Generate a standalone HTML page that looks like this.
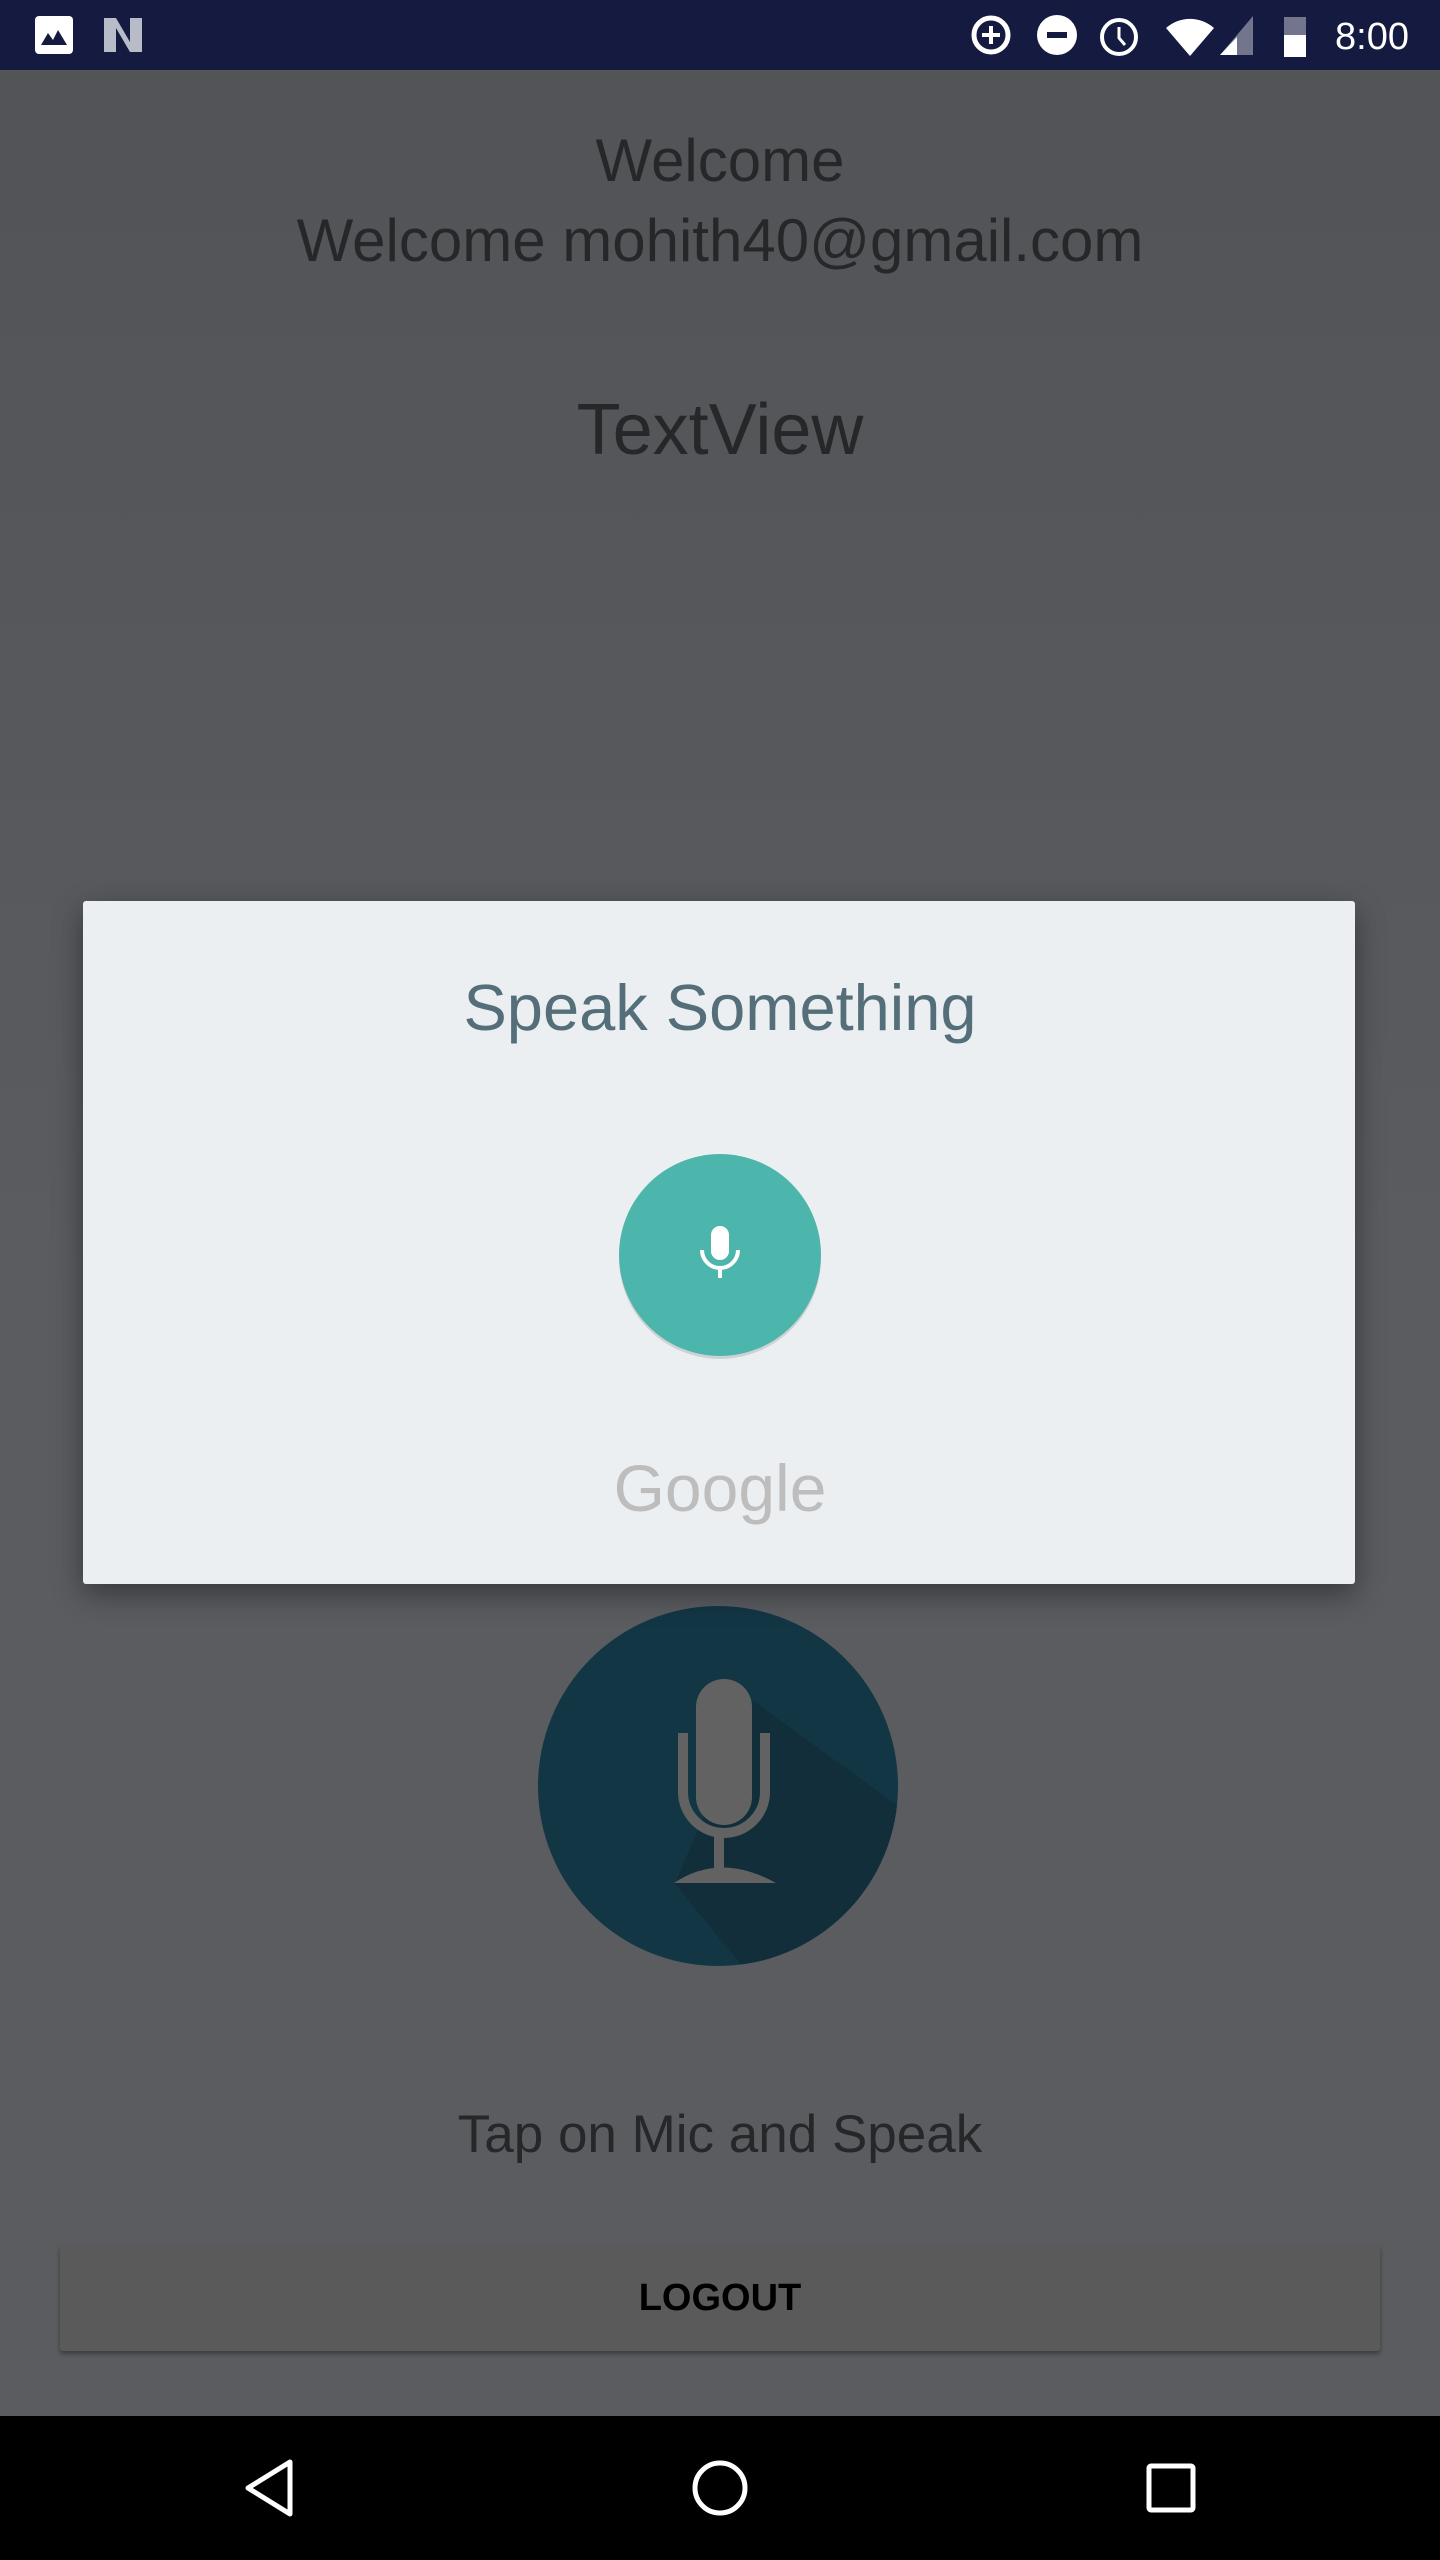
<!DOCTYPE html>
<html><head><meta charset="utf-8"><style>
html,body{margin:0;padding:0;}
body{width:1440px;height:2560px;position:relative;overflow:hidden;font-family:"Liberation Sans",sans-serif;
background:linear-gradient(180deg,#515356 0%,#5a5c60 50%,#5a5c60 100%);}
.t{position:absolute;left:0;width:1440px;text-align:center;white-space:nowrap;}
</style></head><body>
<div style="position:absolute;left:0;top:0;width:1440px;height:70px;background:#151a40"></div>
<svg style="position:absolute;left:0;top:0" width="1440" height="70">
<rect x="35" y="16" width="38" height="38" rx="4" fill="#fff"/>
<path d="M41 45 L48 33 L53 40 L58 30 L67 45 Z" fill="#151a40"/>
<path d="M104 18 L116 18 L130 42 L130 18 L142 18 L142 52 L130 52 L116 28 L116 52 L104 52Z" fill="#b8bcc8"/>
<circle cx="991" cy="35" r="17" fill="none" stroke="#fff" stroke-width="5"/>
<path d="M991 26 v18 M982 35 h18" stroke="#fff" stroke-width="4"/>
<circle cx="1057" cy="35" r="20" fill="#fff"/><rect x="1047" y="32" width="20" height="6" fill="#151a40"/>
<circle cx="1119" cy="37" r="17" fill="none" stroke="#fff" stroke-width="4"/>
<path d="M1119 27 v11 l6 7" stroke="#fff" stroke-width="3" fill="none"/>
<path d="M1166 28 a36 36 0 0 1 48 0 L1190 56Z" fill="#fff"/>
<path d="M1253 16 L1253 55 L1220 55Z" fill="#fff" opacity=".4"/><path d="M1237 37 L1237 55 L1220 55Z" fill="#fff"/>
<rect x="1284" y="17" width="22" height="40" fill="#fff" opacity=".4"/><rect x="1284" y="35" width="22" height="22" fill="#fff"/>
<text x="1335" y="49" font-size="38" fill="#fff" font-family="Liberation Sans">8:00</text>
</svg>
<div class="t" style="top:126px;font-size:60px;color:#262729">Welcome</div>
<div class="t" style="top:206px;font-size:60px;color:#262729">Welcome mohith40@gmail.com</div>
<div class="t" style="top:389px;font-size:72px;color:#262729">TextView</div>
<svg style="position:absolute;left:0;top:0" width="1440" height="2560">
<defs><clipPath id="c"><circle cx="718" cy="1786" r="180"/></clipPath></defs>
<circle cx="718" cy="1786" r="180" fill="#133645"/>
<polygon clip-path="url(#c)" points="752,1700 1000,1880 900,2000 770,2000 675,1884" fill="#112e3a"/>
<rect x="696" y="1679" width="56" height="146" rx="28" fill="#626262"/>
<path d="M683 1733 V1792 a41 41 0 0 0 82 0 V1733" fill="none" stroke="#626262" stroke-width="10"/>
<rect x="714" y="1832" width="10" height="38" fill="#626262"/>
<path d="M674 1883 Q720 1852 776 1883 Z" fill="#626262"/>
</svg>
<div class="t" style="top:2104px;font-size:53px;color:#262729">Tap on Mic and Speak</div>
<div style="position:absolute;left:60px;top:2245px;width:1320px;height:106px;background:#5a5a5b;box-shadow:0 3px 5px rgba(0,0,0,.35);border-radius:3px"></div>
<div class="t" style="top:2277px;font-size:38px;color:#000;font-weight:bold">LOGOUT</div>
<div style="position:absolute;left:83px;top:901px;width:1272px;height:683px;background:#eceff2;box-shadow:0 10px 30px rgba(0,0,0,.4);border-radius:3px"></div>
<div class="t" style="top:970px;font-size:65px;color:#546e7a">Speak Something</div>
<svg style="position:absolute;left:0;top:0" width="1440" height="2560">
<circle cx="720" cy="1258" r="101" fill="#000" opacity=".12"/>
<circle cx="720" cy="1255" r="101" fill="#4db6ac"/>
<rect x="711" y="1226" width="18" height="34" rx="9" fill="#fff"/>
<path d="M702 1250 a18 18 0 0 0 36 0" fill="none" stroke="#fff" stroke-width="4"/>
<rect x="718" y="1266" width="4" height="12" fill="#fff"/>
</svg>
<div class="t" style="top:1450px;font-size:66px;color:#bdbdbd">Google</div>
<div style="position:absolute;left:0;top:2416px;width:1440px;height:144px;background:#000"></div>
<svg style="position:absolute;left:0;top:2416px" width="1440" height="144">
<path d="M290 46 L290 98 L248 72 Z" fill="none" stroke="#fff" stroke-width="5" stroke-linejoin="round"/>
<circle cx="720" cy="72" r="25" fill="none" stroke="#fff" stroke-width="5"/>
<rect x="1149" y="50" width="44" height="44" rx="2" fill="none" stroke="#fff" stroke-width="5"/>
</svg>
</body></html>
